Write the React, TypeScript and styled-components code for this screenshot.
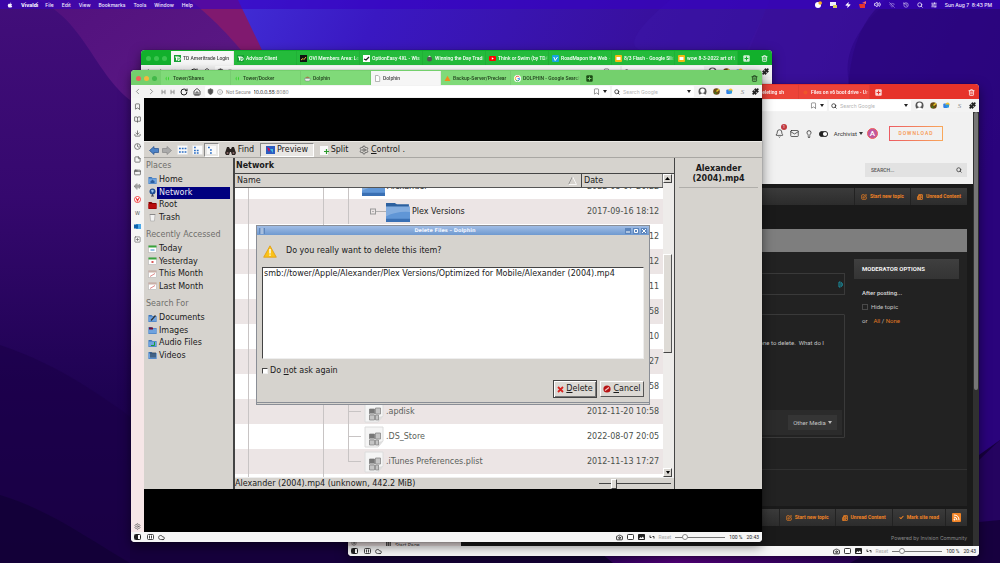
import React from 'react';
import styled, { createGlobalStyle, css } from 'styled-components';
import {
  Bell, Bookmark, BookOpen, Camera, Check, ChevronLeft, ChevronRight, Clock, Cloud, Download,
  Home, Info, Lightbulb, Mail, Newspaper, Puzzle,
  RotateCw, Search, Settings, Shield, SquarePen, SquarePlus,
  StickyNote, Trash2, Volume2, WifiOff, Zap, AppWindow, History, AudioLines, SlidersHorizontal,
} from 'lucide-react';
import { FaApple } from 'react-icons/fa';

const ui = '"Inter", "Liberation Sans", sans-serif';
const kde = '"DejaVu Sans", "Liberation Sans", sans-serif';
const forum = '"Roboto", "Liberation Sans", sans-serif';

const GlobalStyle = createGlobalStyle`
  * { box-sizing: border-box; }
  html, body { margin: 0; background: #1c0050; }
  body { font: 5px/8px ${ui}; overflow: hidden; }
  button, input { font: inherit; color: inherit; margin: 0; padding: 0; }
  button { border: 0; background: none; display: flex; align-items: center; justify-content: center; white-space: nowrap; }
  a { color: inherit; text-decoration: none; }
  ul { list-style: none; margin: 0; padding: 0; }
  h1, h2, p { margin: 0; font: inherit; }
  svg { display: block; flex: none; }
`;

/* ---------- desktop ---------- */
const Desktop = styled.div`
  position: relative;
  min-height: 100vh;
  overflow: hidden;
`;
const Wallpaper = styled.svg`
  position: absolute;
  inset: 0;
  width: 100%;
  height: 100%;
`;
const MenuBar = styled.header`
  position: relative;
  display: flex;
  align-items: center;
  height: 9px;
  padding: 0 8px 0 7px;
  background: rgba(55, 0, 195, 0.6);
  color: #f4efff;
  font-weight: 500;
`;
const Menus = styled.nav`
  display: flex;
  align-items: center;
  gap: 8px;
  flex: 1;
  b { font-weight: 800; margin-right: -1px; }
`;
const MenuExtras = styled.div`
  display: flex;
  align-items: center;
  gap: 8px;
  white-space: pre;
`;

const wallpaper = (
  <Wallpaper viewBox="0 0 1000 563" preserveAspectRatio="none" aria-hidden="true">
    <defs>
      <linearGradient id="base" x1="0" y1="0" x2="1" y2="0.25">
        <stop offset="0.2" stopColor="#4130d8" /><stop offset="0.36" stopColor="#3a18c2" />
        <stop offset="0.62" stopColor="#38109e" /><stop offset="1" stopColor="#2a037c" />
      </linearGradient>
      <linearGradient id="leftmid" x1="0" y1="0" x2="0.4" y2="1">
        <stop offset="0" stopColor="#50107c" /><stop offset="0.5" stopColor="#5d1a86" /><stop offset="1" stopColor="#2c0668" />
      </linearGradient>
      <linearGradient id="leftdark" x1="0" y1="0" x2="0" y2="1">
        <stop offset="0" stopColor="#420e7a" /><stop offset="0.35" stopColor="#35086e" />
        <stop offset="0.7" stopColor="#1e0252" /><stop offset="1" stopColor="#17003e" />
      </linearGradient>
      <linearGradient id="mag" x1="0" y1="0" x2="1" y2="0">
        <stop offset="0" stopColor="#2a0060" /><stop offset="0.3" stopColor="#5c0088" /><stop offset="1" stopColor="#25005a" />
      </linearGradient>
    </defs>
    <rect width="1000" height="563" fill="url(#base)" />
    <path d="M640 50C625 45 640 25 670 0H770L745 60V563H640Z" fill="#3c16a8" opacity=".5" />
    <path d="M770 0 742 60V110H860C830 60 860 25 890 0Z" fill="#3d129e" opacity=".6" />
    <path d="M885 0C850 30 850 70 846 110H1000V0Z" fill="#2b057d" opacity=".7" />
    <path d="M0 0H238L262 50 300 563H0Z" fill="#80196f" />
    <path d="M0 0H190C215 20 228 35 241 50L280 563H0Z" fill="url(#leftmid)" />
    <path d="M0 0H38C90 22 100 95 150 110V563H0Z" fill="url(#leftdark)" />
    <path d="M0 345C60 365 110 400 160 440V563H0Z" fill="#1a0048" opacity=".6" />
    <path d="M0 495C50 510 90 540 130 563H0Z" fill="#0e0030" opacity=".55" />
    <path d="M130 520H1000V563H130Z" fill="#16003c" />
    <path d="M585 540 613 563H860L890 535Z" fill="url(#mag)" />
    <path d="M979 455 1000 440V563H850C890 540 940 525 979 521Z" fill="#17003f" />
    <path d="M979 460 1000 440V520L979 522Z" fill="#250360" />
  </Wallpaper>
);

/* ---------- browser chrome ---------- */
const Win = styled.section<{ $left: string; $right: string; $top: number; $bottom: number }>`
  position: absolute;
  left: ${(p) => p.$left};
  right: ${(p) => p.$right};
  top: ${(p) => p.$top}px;
  bottom: ${(p) => p.$bottom}px;
  display: flex;
  flex-direction: column;
  border-radius: 4px;
  overflow: hidden;
  background: #f7f7f7;
`;
const WinShadow = styled.div<{ $left: string; $right: string; $top: number; $bottom: number }>`
  position: absolute;
  left: ${(p) => p.$left};
  right: ${(p) => p.$right};
  top: ${(p) => p.$top}px;
  bottom: ${(p) => p.$bottom}px;
  border-radius: 4px;
  box-shadow: 0 4px 12px rgba(0, 0, 0, 0.5), 0 0 1px rgba(0, 0, 0, 0.7);
`;
const TabStrip = styled.div<{ $bg: string; $fg: string }>`
  display: flex;
  height: 15px;
  flex: none;
  padding: 1px 4px 0 5px;
  background: ${(p) => p.$bg};
  color: ${(p) => p.$fg};
  align-items: center;
`;
const Lights = styled.div`
  display: flex;
  gap: 3px;
  width: 25px;
  flex: none;
`;
const Light = styled.i<{ $c: string }>`
  width: 5px;
  height: 5px;
  border-radius: 50%;
  background: ${(p) => p.$c};
`;
const Tab = styled.button<{ $w: number; $bg: string; $active?: boolean }>`
  width: ${(p) => p.$w}px;
  flex: none;
  height: 100%;
  gap: 2px;
  padding: 0 0 0 3px;
  justify-content: flex-start;
  font-family: ${forum};
  font-weight: 500;
  overflow: hidden;
  border-right: 1px solid rgba(0, 0, 0, 0.06);
  background: ${(p) => (p.$active ? '#f6f6f6' : p.$bg)};
  color: ${(p) => (p.$active ? '#444' : 'inherit')};
`;
const TabTitle = styled.span`
  flex: 1;
  min-width: 0;
  text-align: left;
  overflow: hidden;
  mask-image: linear-gradient(to right, #000 92%, transparent);
`;
const StripEnd = styled.div`
  flex: 1;
  display: flex;
  justify-content: space-between;
  align-items: center;
  padding-left: 5px;
`;
const Toolbar = styled.div`
  display: flex;
  align-items: center;
  height: 13px;
  flex: none;
  background: #f3f3f3;
  color: #222;
  padding: 0 3px 0 2px;
  gap: 2px;
`;
const NavButtons = styled.div`
  display: flex;
  align-items: center;
  justify-content: space-between;
  width: 70px;
  padding: 0 2px 0 0;
`;
const Field = styled.label<{ $w?: number }>`
  display: flex;
  align-items: center;
  gap: 3px;
  height: 11px;
  padding: 0 3px 0 2px;
  background: #fff;
  border-radius: 1px;
  min-width: 0;
  ${(p) => (p.$w ? css`width: ${p.$w}px; flex: none;` : css`flex: 1;`)}
  input { border: 0; background: none; outline: 0; min-width: 0; flex: 1; height: 9px; }
  input::placeholder { color: #b4b4b4; opacity: 1; }
`;
const Address = styled.span`
  display: flex;
  align-items: center;
  flex: 1;
  min-width: 0;
  && input { flex: none; field-sizing: content; }
`;
const Muted = styled.span`
  color: #888;
  white-space: nowrap;
`;
const NotSecure = styled(Muted)`
  font-family: ${forum};
`;
const Extensions = styled.div`
  display: flex;
  align-items: center;
  padding-left: 2px;
  width: 63px;
  flex: none;
  justify-content: space-between;
`;
const Serif = styled.span`
  font: italic 7px/8px "Liberation Serif", serif;
  color: #888;
  width: 7px;
  text-align: center;
`;
const StatusBar = styled.footer`
  display: flex;
  align-items: center;
  height: 10px;
  flex: none;
  gap: 4px;
  padding: 0 3px 0 3px;
  background: #f6f6f6;
  color: #222;
  font-family: ${forum};
  button:first-child { margin-right: 2px; }
`;
const Grow = styled.span`
  flex: 1;
`;
const Faint = styled.button`
  && { color: #aaa; }
`;
const Zoom = styled.input`
  appearance: none;
  width: 50px;
  height: 6px;
  background: linear-gradient(#777, #777) center / 100% 1px no-repeat;
  &::-webkit-slider-thumb {
    appearance: none;
    width: 6px;
    height: 6px;
    border-radius: 50%;
    background: #fff;
    border: 1px solid #888;
  }
`;

const Caret = ({ c = '#222' }: { c?: string }) => (
  <svg width="4" height="3" viewBox="0 0 4 3"><path d="M0 0h4L2 3z" fill={c} /></svg>
);
const Skip = () => (
  <svg width="5" height="6" viewBox="0 0 5 6"><path d="M1 .8v4.400M4 .8v4.400M1 3h3" stroke="#888" strokeWidth=".9" /></svg>
);
const PlusBox = ({ c, s }: { c: string; s: string }) => (
  <svg width="7" height="7" viewBox="0 0 7 7"><rect x=".3" y=".3" width="6.4" height="6.4" rx="1" fill={c} /><path d="M3.5 1.6v3.8M1.6 3.5h3.8" stroke={s} /></svg>
);
const Fav = ({ kind }: { kind: string }) => {
  const art: Record<string, React.ReactNode> = {
    td: <><rect width="7" height="7" fill="#17a034" /><path d="M1 2h3M2.5 2v3.5M4 5.5V2Q6.200 2 6.200 3.800T4 5.500" stroke="#fff" fill="none" /></>,
    dark: <><rect width="7" height="7" fill="#111" /><path d="M1 5 3 3.500 4 4.500 6 2" stroke="#e7b73c" fill="none" /></>,
    light: <><rect width="7" height="7" fill="#fff" /><path d="M1 4 3 5 6 2" stroke="#222" strokeWidth="1.300" fill="none" /></>,
    day: <><circle cx="3.500" cy="4" r="2.500" fill="#555" /><path d="M2 2 3.500.5 5 2" fill="#ddd" /></>,
    yt: <><rect y="1" width="7" height="5" rx="1" fill="#f00" /><path d="m2.800 2.300 2 1.200-2 1.200z" fill="#fff" /></>,
    vimeo: <><rect width="7" height="7" rx="1" fill="#16a5e0" /><path d="m1.800 2 1.400 3.500L5.500 2" stroke="#fff" fill="none" /></>,
    slides: <><rect width="7" height="7" rx="1" fill="#f5b912" /><rect x="1.500" y="2" width="4" height="3" fill="#fff" /></>,
    tower: <path d="M2.600 1.500A2.500 2.500 0 0 0 2.600 5.500ZM4 1.500A2.500 2.500 0 0 1 4 5.500Z" fill="#35d32c" />,
    bowl: <><path d="M.5 3.500h6L5.500 6h-4z" fill="#eee" stroke="#667" strokeWidth=".4" /><path d="M1 3Q3.500 0 6 3z" fill="#a08050" /></>,
    page: <path d="M1.500.5h2.700L5.700 2v4.500H1.500Z" fill="#fff" stroke="#999" strokeWidth=".7" />,
    tri: <path d="M3.500.8 6.500 6h-6z" fill="#f08c1c" />,
    google: <><circle cx="3.500" cy="3.500" r="3.500" fill="#fff" /><path d="M5.400 2.200A2.200 2.200 0 0 0 1.600 2.500" stroke="#e94235" fill="none" /><path d="M1.600 2.500A2.200 2.200 0 0 0 1.700 4.800" stroke="#fabb05" fill="none" /><path d="M1.700 4.800A2.200 2.200 0 0 0 5 5.200" stroke="#34a853" fill="none" /><path d="M5 5.200 5.700 3.600H3.600" stroke="#4285f4" fill="none" /></>,
    dots: <circle cx="3.500" cy="3.500" r="2" fill="#f05a28" opacity=".8" />,
  };
  return <svg width="7" height="7" viewBox="0 0 7 7">{art[kind]}</svg>;
};

type TabInfo = { title: string; icon: string; active?: boolean };
type ChromeProps = {
  strip: string; tabBg: string; fg: string; lights: string[]; tabs: TabInfo[]; tabW: number;
  lead?: number; url: string; port?: string; insecure?: boolean;
};
const Lead = styled.span<{ $w: number }>`
  width: ${(p) => p.$w}px;
  flex: none;
`;

function Chrome({ strip, tabBg, fg, lights, tabs, tabW, lead, url, port, insecure }: ChromeProps) {
  const light = fg === '#fff';
  return (
    <>
      <TabStrip $bg={strip} $fg={fg}>
        <Lights>{lights.map((c, i) => <Light key={i} $c={c} />)}</Lights>
        {lead && <Lead $w={lead} />}
        {tabs.map((t, i) => (
          <Tab key={i} $w={tabW} $bg={tabBg} $active={t.active}>
            <Fav kind={t.icon} />
            <TabTitle>{t.title}</TabTitle>
          </Tab>
        ))}
        <StripEnd>
          <button aria-label="New tab"><PlusBox c={light ? '#ffffffcc' : '#1d4d16'} s={strip} /></button>
          <button aria-label="Closed tabs"><Trash2 size={7} strokeWidth={2.5} /></button>
        </StripEnd>
      </TabStrip>
      <Toolbar>
        <NavButtons>
          <button aria-label="Back"><ChevronLeft size={9} color="#777" /></button>
          <button aria-label="Forward"><ChevronRight size={9} color="#777" /></button>
          <button aria-label="Rewind"><Skip /></button>
          <button aria-label="Fast forward"><Skip /></button>
          <button aria-label="Reload"><RotateCw size={8} strokeWidth={3} /></button>
          <button aria-label="Home"><Home size={8} strokeWidth={2.5} /></button>
        </NavButtons>
        <Field>
          <Shield size={7} fill="#555" color="#555" />
          <Info size={6} color="#777" />
          {insecure && <NotSecure>Not Secure</NotSecure>}
          <Address>
            <input aria-label="Address" readOnly value={url} />
            {port && <Muted>{port}</Muted>}
          </Address>
          <Bookmark size={7} color="#555" />
          <Caret />
        </Field>
        <Field $w={82}>
          <Search size={6} strokeWidth={3} />
          <input aria-label="Search" placeholder="Search Google" />
          <Caret />
        </Field>
        <Extensions>
          <svg width="9" height="9" viewBox="0 0 9 9"><circle cx="4.500" cy="4.500" r="4" fill="#555" /><circle cx="4.500" cy="3.700" r="2.300" fill="#fff" /><path d="M1.500 8Q4.500 4.500 7.500 8V9h-6Z" fill="#fff" /></svg>
          <svg width="7" height="7" viewBox="0 0 7 7"><circle cx="3.500" cy="3.500" r="3.300" fill="#6a4a12" /><path d="M3.500 3.500 6 1.200" stroke="#e6c62a" strokeWidth="1.500" /><circle cx="2.500" cy="5" r="1" fill="#3b7c1e" /></svg>
          <svg width="7" height="7" viewBox="0 0 7 7"><rect x=".3" y="1.500" width="4.500" height="4.500" rx="1" fill="#2f7fe6" /><circle cx="4.600" cy="2.600" r="2" fill="#f2c230" /><path d="M3 2.500h3v3H3z" fill="#2b9adf" /></svg>
          <Serif>S</Serif>
          <Puzzle size={7} fill="#222" />
        </Extensions>
      </Toolbar>
    </>
  );
}

function BrowserStatus() {
  return (
    <StatusBar>
      <button aria-label="Panel"><svg width="7" height="6" viewBox="0 0 7 6"><rect x=".5" y=".5" width="6" height="5" rx=".8" fill="#fff" stroke="#222" /><path d="M1 1h3v4H1z" fill="#222" /></svg></button>
      <button aria-label="Tiling"><svg width="7" height="6" viewBox="0 0 7 6"><rect x=".5" y=".5" width="6" height="5" rx="1" fill="#fff" stroke="#333" strokeWidth=".9" /><path d="M2.500 1.500v3M4.500 1.500v3" stroke="#333" strokeWidth=".9" /></svg></button>
      <button aria-label="Sync"><Cloud size={7} strokeWidth={2.5} /></button>
      <Grow />
      <button aria-label="Capture"><Camera size={7} strokeWidth={3} /></button>
      <button aria-label="Tile"><svg width="7" height="6" viewBox="0 0 7 6"><rect x=".5" y=".5" width="6" height="5" rx=".8" fill="#fff" stroke="#222" strokeWidth=".9" /></svg></button>
      <button aria-label="Images"><svg width="7" height="6" viewBox="0 0 7 6"><rect width="7" height="6" rx=".8" fill="#222" /><path d="m1 5 1.500-2 1 1L5 2.500 6 5z" fill="#fff" /></svg></button>
      <button aria-label="Page actions"><svg width="6" height="6" viewBox="0 0 6 6"><path d="M1 1.500v2h1.500M5 4.500v-2H3.500" stroke="#333" fill="none" /></svg></button>
      <Faint>Reset</Faint>
      <Zoom type="range" aria-label="Zoom" min={0} max={100} defaultValue={16} />
      <span>100 %</span>
      <span>20:43</span>
    </StatusBar>
  );
}

/* ---------- forum page ---------- */
const PageRow = styled.div`
  display: flex;
  flex: 1;
  min-height: 0;
`;
const BookmarksPanel = styled.aside`
  width: 113px;
  flex: none;
  display: flex;
  align-items: flex-end;
  gap: 29px;
  padding: 0 3px;
  background: linear-gradient(#f4f4f4 50%, #e9dede);
  color: #444;
  height: 100%;
  p { display: flex; align-items: center; gap: 4px; height: 3px; }
`;
const Forum = styled.div`
  flex: 1;
  display: flex;
  flex-direction: column;
  background: #1a1a1a;
  color: #c4c4c4;
  font-family: ${forum};
  min-width: 0;
`;
const ForumHead = styled.header`
  height: 72px;
  flex: none;
  background: #f1f1f1;
  padding: 12px 6px 0;
  color: #333;
  display: flex;
  flex-direction: column;
  align-items: flex-end;
  gap: 20px;
`;
const UserBar = styled.div`
  display: flex;
  align-items: center;
  gap: 6px;
  padding-right: 24px;
  height: 19px;
`;
const Alert = styled.button`
  position: relative;
  span {
    position: absolute;
    left: 6px;
    top: -5px;
    width: 6px;
    height: 6px;
    border-radius: 50%;
    background: #c0393f;
    color: #fff;
    font: 4px/6px ${forum};
  }
`;
const UserButton = styled.button`
  && { font-size: 6px; gap: 2px; }
`;
const Avatar = styled.span`
  width: 11px;
  height: 11px;
  border-radius: 50%;
  border: 1px solid #f0625a;
  background: #c0569f;
  color: #fff;
  font: 500 8px/9px ${forum};
  text-align: center;
  margin-left: -2px;
`;
const DownloadButton = styled.a`
  width: 54px;
  height: 15px;
  margin-left: 5px;
  border: 1px solid;
  border-image: linear-gradient(to right, #ec5a62, #f9a85a) 1;
  color: #f7944a;
  font: 500 5px/13px ${forum};
  text-align: center;
  letter-spacing: 1px;
`;
const ForumSearch = styled.label`
  display: flex;
  align-items: center;
  width: 102px;
  height: 14px;
  padding: 0 5px 0 6px;
  background: #e2e2e2;
  input { flex: 1; min-width: 0; border: 0; background: none; font-weight: 500; }
  input::placeholder { color: #555; opacity: 1; }
`;
const ForumBar = styled.nav<{ $top: number }>`
  display: flex;
  justify-content: flex-end;
  height: 17px;
  flex: none;
  margin: ${(p) => p.$top}px 6px 0 0;
  background: linear-gradient(#3b3b3b, #2c2c2c);
  color: #f08326;
  font: 700 5px/17px ${forum};
  a { display: flex; align-items: center; gap: 3px; padding: 0 6px; border-left: 1px solid #222; }
`;
const Crumbs = styled.div`
  height: 23px;
  flex: none;
  margin: 24px 6px 0 0;
  background: #7e7e7e;
`;
const Thread = styled.main`
  display: flex;
  flex-direction: column;
  flex: 1;
  margin-right: 6px;
  background: #222;
`;
const Columns = styled.div`
  display: flex;
  gap: 9px;
  padding: 7px 8px 0 0;
  height: 218px;
  border-bottom: 1px solid #313131;
`;
const Composer = styled.div`
  flex: 1;
  display: flex;
  flex-direction: column;
  gap: 19px;
  padding-top: 14px;
`;
const TagBox = styled.div`
  height: 22px;
  border: 1px solid #3a3a3a;
  display: flex;
  align-items: center;
  justify-content: flex-end;
`;
const Editor = styled.div`
  height: 124px;
  border: 1px solid #3a3a3a;
  border-radius: 1px;
  display: flex;
  flex-direction: column;
  justify-content: space-between;
  padding: 24px 2px 2px 0;
  p { text-align: right; padding-right: 18px; white-space: pre; font-size: 6px; }
`;
const EditorFoot = styled.div`
  height: 25px;
  background: #2b2b2b;
  display: flex;
  justify-content: flex-end;
  align-items: center;
  padding-right: 5px;
  button { width: 49px; height: 15px; background: #353535; font-size: 6px; gap: 2px; }
`;
const Moderator = styled.aside`
  width: 105px;
  display: flex;
  flex-direction: column;
  gap: 6px;
  h2 { height: 20px; padding-left: 8px; background: linear-gradient(#3f3f3f, #343434); color: #f0f0f0; font: 700 6px/20px ${forum}; }
  p, label { padding-left: 8px; display: flex; align-items: center; gap: 3px; font-size: 6px; height: 8px; }
  a { color: #e07a22; }
`;
const AfterPosting = styled.p`
  && { margin-top: 4px; color: #ddd; font: 500 6px/8px ${forum}; }
`;
const MiniCheck = styled.input`
  appearance: none;
  width: 6px;
  height: 6px;
  border: 1px solid #4a4a4a;
`;
const Powered = styled.p`
  && { height: 20px; padding-top: 7px; text-align: right; margin-right: 6px; color: #8a8a8a; font: 5px/10px ${ui}; }
`;
const Scroll = styled.div`
  width: 6px;
  background: #303030;
  padding: 0 1px;
  &::before { content: ''; display: block; height: 278px; border-radius: 2px; background: #767676; }
`;

function ForumPage() {
  return (
    <PageRow>
      <BookmarksPanel>
        <Settings size={6} />
        <p>
          <svg width="5" height="5" viewBox="0 0 5 5"><path d="M0 0h5M0 2h5M0 4h5" stroke="#222" strokeDasharray="1.300 .5" strokeWidth="1.400" /></svg>
          Start Page
        </p>
      </BookmarksPanel>
      <Forum>
        <ForumHead>
          <UserBar>
            <Alert aria-label="Notifications"><Bell size={9} strokeWidth={2} /><span>1</span></Alert>
            <Mail size={9} strokeWidth={2} />
            <Lightbulb size={8} strokeWidth={2.5} />
            <svg width="9" height="6" viewBox="0 0 9 6"><rect x=".4" y=".4" width="8.200" height="5.200" rx="2.600" fill="#222" stroke="#222" strokeWidth=".8" /><circle cx="6" cy="3" r="2.100" fill="#fff" /></svg>
            <UserButton>Archivist <Caret c="#333" /></UserButton>
            <Avatar>A</Avatar>
            <DownloadButton href="#download">DOWNLOAD</DownloadButton>
          </UserBar>
          <ForumSearch>
            <input aria-label="Search the forum" placeholder="SEARCH..." />
            <Search size={6} strokeWidth={3} />
          </ForumSearch>
        </ForumHead>
        <ForumBar $top={4}>
          <a href="#new"><SquarePen size={6} strokeWidth={3} />Start new topic</a>
          <a href="#unread"><Newspaper size={6} strokeWidth={3} />Unread Content</a>
        </ForumBar>
        <Crumbs />
        <Thread>
          <Columns>
            <Composer>
              <TagBox>
                <svg width="6" height="7" viewBox="0 0 6 7"><path d="M1 1v5M1 1h1.500M1 6h1.500M3 1.500C5 2 5 5 3 5.500Z" stroke="#1893a5" fill="none" /></svg>
              </TagBox>
              <Editor>
                <p>one to delete.  What do I</p>
                <EditorFoot><button>Other Media <Caret c="#bbb" /></button></EditorFoot>
              </Editor>
            </Composer>
            <Moderator>
              <h2>MODERATOR OPTIONS</h2>
              <AfterPosting>After posting...</AfterPosting>
              <label><MiniCheck type="checkbox" />Hide topic</label>
              <p>or&nbsp;&nbsp;<span><a href="#all">All</a> / <a href="#none">None</a></span></p>
            </Moderator>
          </Columns>
        </Thread>
        <ForumBar $top={3}>
          <a href="#new"><SquarePen size={6} strokeWidth={3} />Start new topic</a>
          <a href="#unread"><Newspaper size={6} strokeWidth={3} />Unread Content</a>
          <a href="#read"><Check size={5} strokeWidth={5} />Mark site read</a>
          <a href="#rss" aria-label="RSS">
            <svg width="9" height="9" viewBox="0 0 9 9"><rect width="9" height="9" rx="1" fill="#f08326" /><circle cx="2.500" cy="6.500" r=".9" fill="#fff" /><path d="M1.800 4Q5 4 5 7.200M1.800 2Q7 2 7 7.200" stroke="#fff" fill="none" /></svg>
          </a>
        </ForumBar>
        <Powered>Powered by Invision Community</Powered>
      </Forum>
      <Scroll />
    </PageRow>
  );
}

/* ---------- remote file manager ---------- */
const SideRail = styled.nav`
  width: 13px;
  flex: none;
  display: flex;
  flex-direction: column;
  align-items: center;
  justify-content: space-between;
  padding: 2px 0 1px;
  background: linear-gradient(#f5f5f5 43%, #f6e6e7 58%);
  color: #555;
`;
const RailGroup = styled.div<{ $h: number }>`
  display: flex;
  flex-direction: column;
  height: ${(p) => p.$h}px;
  button { flex: 1; }
`;
const Remote = styled.div`
  flex: 1;
  min-width: 0;
  display: flex;
  flex-direction: column;
  padding: 43px 0;
  background: #000;
  font: 8px/12px ${kde};
  color: #1a1a1a;
`;
const Dolphin = styled.div`
  position: relative;
  flex: 1;
  min-height: 0;
  display: flex;
  flex-direction: column;
  background: #d6d3ce;
`;
const DolphinBar = styled.div`
  display: flex;
  align-items: center;
  height: 17px;
  flex: none;
  padding: 1px 3px 0;
  border-bottom: 1px solid #a9a7a3;
  border-top: 1px solid #eceae6;
  white-space: nowrap;
`;
const Tool = styled.button<{ $w: number; $down?: boolean }>`
  width: ${(p) => p.$w}px;
  height: 14px;
  flex: none;
  gap: 2px;
  ${(p) => p.$down && css`
    background: #e9e7e4;
    border: 1px solid;
    border-color: #888 #fff #fff #888;
  `}
  u { text-decoration-thickness: 1px; text-underline-offset: 1px; }
`;
const Split = styled.div`
  display: flex;
  flex: 1;
  min-height: 0;
`;
const Places = styled.nav`
  width: 89px;
  flex: none;
  padding: 2px 3px 0 2px;
  h2 { color: #6f6e6b; height: 12px; }
`;
const PlaceList = styled.ul`
  display: flex;
  flex-direction: column;
  height: 50px;
  margin: 2px 0 5px 2px;
`;
const Place = styled.li<{ $on?: boolean }>`
  display: flex;
  flex: 1;
  align-items: stretch;
  svg { align-self: center; }
  a { flex: 1; padding-left: 2px; }
  ${(p) => p.$on && css`a { background: #00007f; color: #e8e8f4; }`}
`;
const View = styled.main`
  flex: 1;
  min-width: 0;
  display: flex;
  flex-direction: column;
  border-left: 2px solid #444;
`;
const ViewTitle = styled.h1`
  && { height: 15px; padding: 2px 1px; font-weight: 700; }
`;
const ListWrap = styled.div`
  flex: 1;
  min-height: 0;
  display: flex;
  border-top: 1px solid #444;
  border-bottom: 1px solid #eee;
`;
const Files = styled.table`
  flex: 1;
  display: flex;
  flex-direction: column;
  border-collapse: collapse;
  min-width: 0;
  overflow: hidden;
  background: #fff;
  thead { display: block; }
  tbody { display: block; flex: 1; min-height: 0; margin-top: -14px; clip-path: inset(14px 0 0 0); }
`;
const HeadRow = styled.tr`
  display: flex;
  height: 14px;
  background: #d6d3ce;
  border-bottom: 1px solid #555;
  th { font-weight: 400; text-align: left; padding: 1px 2px; display: flex; align-items: center; justify-content: space-between; }
  th:first-child { flex: 1; padding-right: 4px; }
  th:last-child { width: 82px; border-left: 1px solid #444; border-right: 1px solid #777; }
`;
const Row = styled.tr<{ $odd: boolean }>`
  display: flex;
  height: 25px;
  line-height: 25px;
  background: ${(p) => (p.$odd ? '#ece5e5' : '#fff')};
  td { padding: 0; display: flex; align-items: center; white-space: nowrap; }
  td:first-child { flex: 1; min-width: 0; }
  td:last-child { width: 76px; color: #4a504a; }
`;
const Guide = styled.span<{ $w: number; $line?: boolean; $end?: boolean }>`
  width: ${(p) => p.$w}px;
  height: ${(p) => (p.$end ? 13 : 25)}px;
  align-self: flex-start;
  flex: none;
  border-left: ${(p) => (p.$line ? '1px solid #c8c4c4' : '0')};
`;
const Branch = styled.span`
  width: 12px;
  height: 1px;
  background: #c8c4c4;
  margin: 0 3px 0 0;
`;
const Name = styled.span<{ $dim?: boolean }>`
  padding-left: 2px;
  color: ${(p) => (p.$dim ? '#5a605a' : '#1a1a1a')};
`;
const Bar = styled.div`
  width: 11px;
  flex: none;
  background: #eeecea;
  display: flex;
  flex-direction: column;
  justify-content: space-between;
  button { width: 9px; height: 9px; background: #dad7d2; border: 1px solid; border-color: #fff #444 #444 #fff; }
`;
const BarThumb = styled.div`
  width: 9px;
  height: 99px;
  margin-bottom: 45px;
  background: #dedbd6;
  border: 1px solid;
  border-color: #fff #555 #444 #fff;
`;
const FileStatus = styled.div`
  height: 11px;
  flex: none;
  display: flex;
  align-items: center;
  justify-content: space-between;
  padding-right: 3px;
  line-height: 11px;
`;
const IconSize = styled.input`
  appearance: none;
  width: 72px;
  height: 10px;
  background: linear-gradient(#444, #444) center / 100% 1px no-repeat;
  &::-webkit-slider-thumb { appearance: none; width: 6px; height: 10px; background: #dedbd6; border: 1px solid; border-color: #fff #444 #444 #fff; }
`;
const InfoPane = styled.aside`
  width: 88px;
  flex: none;
  border-left: 1px solid #444;
  padding: 6px 4px;
  text-align: center;
  font-weight: 700;
  line-height: 10px;
  p { padding: 0 12px 3px; border-bottom: 1px solid #b0aeaa; }
`;

/* ---------- delete dialog ---------- */
const Dialog = styled.form`
  position: absolute;
  left: 112px;
  right: 112px;
  top: 84px;
  height: 180px;
  display: flex;
  flex-direction: column;
  background: #d6d3ce;
  border: 1px solid #8a8e96;
  border-bottom: 3px double #8a8e96;
`;
const DialogTitle = styled.div`
  display: flex;
  align-items: center;
  justify-content: space-between;
  height: 9px;
  padding: 0 2px;
  background: linear-gradient(#a0bde6, #6f99cf);
  color: #f2f6ff;
  font: 700 5px/9px ${kde};
  span:last-child { display: flex; gap: 2px; }
`;
const TitleKey = styled.button`
  && { width: 6px; height: 6px; background: #5d86bd; }
`;
const Question = styled.div`
  display: flex;
  align-items: center;
  gap: 9px;
  height: 32px;
  padding-left: 6px;
`;
const Items = styled.ul`
  && {
    height: 92px;
    margin: 0 5px;
    padding: 0 1px;
    background: #fff;
    border: 1px solid;
    border-color: #444 #eee #eee #444;
    white-space: nowrap;
    overflow: hidden;
  }
`;
const DontAsk = styled.label`
  display: flex;
  align-items: center;
  gap: 2px;
  height: 24px;
  padding-left: 5px;
  input { appearance: none; width: 6px; height: 6px; background: #fff; border: 1px solid; border-color: #444 #eee #eee #444; }
`;
const Actions = styled.div`
  display: flex;
  justify-content: flex-end;
  align-items: center;
  gap: 3px;
  height: 18px;
  margin-top: -3px;
  padding-right: 5px;
`;
const Push = styled.button<{ $default?: boolean }>`
  && {
    height: ${(p) => (p.$default ? 18 : 16)}px;
    width: 44px;
    gap: 2px;
    background: #dcd9d4;
    border: 1px solid;
    border-color: #fff #555 #555 #fff;
    ${(p) => p.$default && css`border-color: #444; box-shadow: inset 1px 1px #fff, inset -1px -1px #777;`}
  }
`;

const Folder = ({ w, h }: { w: number; h: number }) => (
  <svg width={w} height={h} viewBox="0 0 22 18" preserveAspectRatio="none"><path d="M0 1h8l2 1h11v15H0z" fill="#2d619f" /><path d="M0 4h22v12H0z" fill="#6096d6" /><path d="M0 4h22v5Q10 8 0 13z" fill="#fff" opacity=".22" /><path d="M0 15h22v3H0z" fill="#3a70b4" /></svg>
);
const DocIcon = () => (
  <svg width="20" height="22" viewBox="0 0 20 22"><path d="M1 1h18v14l-5 6H1z" fill="#f5f5f5" stroke="#dcdcdc" /><path d="m19 15-5 1v5z" fill="#ddd" /><path d="M5.500 8h5v5h-5zM11.500 7h5v6h-5zM5.500 14h5v5h-5zM11.500 14h3v5h-3z" fill="#c4c4c4" stroke="#888" strokeWidth=".8" /><path d="M5.500 8h5v4h-5z" fill="#777" /></svg>
);
const SmallIcon = ({ kind }: { kind: string }) => {
  const cal = (mark: React.ReactNode, top: string) => (
    <><rect x=".5" y="1" width="8" height="6.500" fill="#fff" stroke="#aaa" strokeWidth=".5" /><rect x=".5" y=".5" width="8" height="2" fill={top} />{mark}</>
  );
  const blue = (extra: React.ReactNode) => <><path d="M.5 1h3l1 1h4v6h-8z" fill="#3c74b8" /><path d="M.5 2.500h8v5h-8z" fill="#6fa3df" />{extra}</>;
  const month = cal(<path d="M2 6.500 7 3.500" stroke="#d88" />, '#c9b0a8');
  const art: Record<string, React.ReactNode> = {
    home: blue(<path d="m2.500 5.500 2-2 2 2v1.500h-4z" fill="#2c5e9f" />),
    net: <><circle cx="4.500" cy="3.500" r="3" fill="#1e4c93" /><path d="M3 2q2-1 3 1l-2 2z" fill="#9cc6f0" /><path d="M3 8h3M4.500 6v2" stroke="#445" /></>,
    root: <><path d="M.5 1h3l1 1h4v6h-8z" fill="#800" /><path d="M.5 3h8v4.500h-8z" fill="#b80c0c" /></>,
    trash: <><path d="M2 1.500h5l-.6 6.500H2.600z" fill="#f2f2f2" stroke="#999" strokeWidth=".5" /><path d="M1.700 1.500h5.600" stroke="#888" /></>,
    today: cal(<path d="M2.500 5h4" stroke="#38c" />, '#38a33c'),
    yest: cal(<path d="M3.500 5h2" stroke="#c22" strokeWidth="1.500" />, '#38a33c'),
    month, last: month,
    docs: blue(<path d="m3 6.500 4.500-5" stroke="#333" strokeWidth="1.200" />),
    images: blue(<path d="M1 1.500h4v2H1z" fill="#713" />),
    audio: blue(<path d="M3 6.500h3.500V3" stroke="#1a9d3a" fill="none" />),
    videos: blue(<path d="M3 1v6M5 1v6M7 1v6M2 3h6M2 5h6" stroke="#234" strokeWidth=".7" />),
  };
  return <svg width="9" height="9" viewBox="0 0 9 9">{art[kind]}</svg>;
};

const ViewIcon = ({ d }: { d: string }) => (
  <svg width="11" height="10" viewBox="0 0 11 10"><rect x=".5" y=".5" width="10" height="9" fill="#fafafa" stroke="#ddd" strokeWidth=".5" /><path d={d} stroke="#2d6fc4" strokeWidth="1.600" strokeDasharray="1.800 1" /></svg>
);

const placeGroups = [
  { title: 'Places', items: [['Home', 'home'], ['Network', 'net'], ['Root', 'root'], ['Trash', 'trash']] },
  { title: 'Recently Accessed', items: [['Today', 'today'], ['Yesterday', 'yest'], ['This Month', 'month'], ['Last Month', 'last']] },
  { title: 'Search For', items: [['Documents', 'docs'], ['Images', 'images'], ['Audio Files', 'audio'], ['Videos', 'videos']] },
];
const rows: { name?: string; date: string; kind?: string }[] = [
  { name: 'Alexander', date: '2022-08-07 20:22', kind: 'folder' },
  { name: 'Plex Versions', date: '2017-09-16 18:12', kind: 'sub' },
  { date: '2017-09-16 18:12' },
  { date: '2017-09-16 18:12' },
  { date: '2017-09-16 18:11' },
  { date: '2012-11-20 10:58' },
  { date: '2022-08-07 20:10' },
  { date: '2012-11-13 17:27' },
  { date: '2012-11-20 10:58' },
  { name: '.apdisk', date: '2012-11-20 10:58', kind: 'doc' },
  { name: '.DS_Store', date: '2022-08-07 20:05', kind: 'doc' },
  { name: '.iTunes Preferences.plist', date: '2012-11-13 17:27', kind: 'last' },
  { date: '' },
];

function DolphinWindow() {
  return (
    <Dolphin>
      <DolphinBar>
        <Tool $w={13} aria-label="Back"><svg width="10" height="9" viewBox="0 0 10 9"><path d="M.5 4.500 5 .5V2.500h4.500v4H5v2z" fill="#4c82c6" stroke="#234f8c" strokeWidth=".7" /></svg></Tool>
        <Tool $w={13} aria-label="Forward"><svg width="10" height="9" viewBox="0 0 10 9"><path d="M9.500 4.500 5 .5V2.500H.5v4H5v2z" fill="#aaa" stroke="#888" strokeWidth=".7" /></svg></Tool>
        <Tool $w={18} aria-label="Icons"><ViewIcon d="M2 3.500h8M2 7h8" /></Tool>
        <Tool $w={13} aria-label="Compact"><ViewIcon d="M2 2.500h2M2 5.500h5M2 8h5" /></Tool>
        <Tool $w={15} $down aria-label="Details"><ViewIcon d="M2 2.500h2M4 5h2M4 8h2" /></Tool>
        <Tool $w={41}>
          <svg width="11" height="9" viewBox="0 0 11 9"><path d="M2 1h2l1 2h1l1-2h2l2 6-1 2H7L6 6H5L4 9H1L0 7z" fill="#2a2320" /><circle cx="2.500" cy="7" r="1" fill="#866" /><circle cx="8.500" cy="7" r="1" fill="#866" /></svg>
          Find
        </Tool>
        <Tool $w={54} $down>
          <svg width="9" height="8" viewBox="0 0 9 8"><rect width="9" height="8" fill="#2c5cc0" /><path d="M1 1 4 3 3 6z" fill="#e04" /><path d="M4 3h3v4z" fill="#4bd" /></svg>
          Preview
        </Tool>
        <Tool $w={40}>
          <svg width="9" height="9" viewBox="0 0 9 9"><rect width="8" height="9" fill="#fafafa" /><path d="M4 5.500h5M6.500 3v5" stroke="#2b9a2b" strokeWidth="1.200" /></svg>
          Split
        </Tool>
        <Tool $w={56}>
          <Settings size={10} color="#555" strokeWidth={2} /><span><u>C</u>ontrol .</span>
        </Tool>
      </DolphinBar>
      <Split>
        <Places>
          {placeGroups.map((g) => (
            <React.Fragment key={g.title}>
              <h2>{g.title}</h2>
              <PlaceList>
                {g.items.map(([label, icon]) => (
                  <Place key={label} $on={label === 'Network'}><SmallIcon kind={icon} /><a href={`#${icon}`}>{label}</a></Place>
                ))}
              </PlaceList>
            </React.Fragment>
          ))}
        </Places>
        <View>
          <ViewTitle>Network</ViewTitle>
          <ListWrap>
            <Files>
              <thead>
                <HeadRow>
                  <th>Name<svg width="9" height="9" viewBox="0 0 9 9"><path d="M.5 8.500 4.500.5" stroke="#888" strokeWidth=".8" /><path d="m4.500.5 4 8h-8" stroke="#fff" strokeWidth=".8" fill="none" /></svg></th>
                  <th>Date</th>
                </HeadRow>
              </thead>
              <tbody>
                {rows.map((r, i) => (
                  <Row key={i} $odd={i % 2 === 1}>
                    <td>
                      <Guide $w={13} /><Guide $w={75} $line /><Guide $w={25} $line />
                      {r.kind === 'folder' && <><Guide $w={14} $line /><Folder w={23} h={19} /><Name>{r.name}</Name></>}
                      {r.kind === 'sub' && (
                        <>
                          <Guide $w={22} $line />
                          <svg width="16" height="7" viewBox="0 0 16 7"><rect x=".5" y="1" width="5" height="5" fill="none" stroke="#999" /><path d="M2 3.500h2M6 3.500h10" stroke="#999" strokeWidth=".7" /></svg>
                          <Folder w={24} h={20} /><Name>{r.name}</Name>
                        </>
                      )}
                      {(r.kind === 'doc' || r.kind === 'last') && (
                        <><Guide $w={1} $line $end={r.kind === 'last'} /><Branch /><DocIcon /><Name $dim>{r.name}</Name></>
                      )}
                    </td>
                    <td>{r.date}</td>
                  </Row>
                ))}
              </tbody>
            </Files>
            <Bar>
              <button aria-label="Scroll up"><svg width="5" height="3" viewBox="0 0 5 3"><path d="M0 3h5L2.500 0z" /></svg></button>
              <BarThumb />
              <button aria-label="Scroll down"><Caret c="#000" /></button>
            </Bar>
          </ListWrap>
          <FileStatus>
            <span>Alexander (2004).mp4 (unknown, 442.2 MiB)</span>
            <IconSize type="range" aria-label="Icon size" defaultValue={18} />
          </FileStatus>
        </View>
        <InfoPane><p>Alexander (2004).mp4</p></InfoPane>
      </Split>
      <Dialog onSubmit={(e) => e.preventDefault()} role="dialog" aria-label="Delete Files">
        <DialogTitle>
          <TitleKey type="button" aria-label="Menu"><svg width="4" height="6" viewBox="0 0 4 6"><path d="M0 1h4M0 3h4M0 5h4M2 0v6" stroke="#dfe9f8" strokeWidth=".7" /></svg></TitleKey>
          <span>Delete Files – Dolphin</span>
          <span>
            <TitleKey type="button" aria-label="Minimize"><svg width="4" height="4" viewBox="0 0 4 4"><path d="M0 3h4" stroke="#fff" /></svg></TitleKey>
            <TitleKey type="button" aria-label="Maximize"><svg width="4" height="4" viewBox="0 0 4 4"><path d="M.5.5h3v3h-3z" fill="none" stroke="#fff" /></svg></TitleKey>
            <TitleKey type="button" aria-label="Close"><svg width="4" height="4" viewBox="0 0 4 4"><path d="m0 0 4 4M4 0 0 4" stroke="#fff" /></svg></TitleKey>
          </span>
        </DialogTitle>
        <Question>
          <svg width="14" height="13" viewBox="0 0 14 13"><path d="m7 .8 6.300 11.400H.7z" fill="#fbc318" stroke="#e09a10" strokeWidth=".8" strokeLinejoin="round" /><path d="M7 4v4.500M7 9.500v1.300" stroke="#fff" strokeWidth="1.400" /></svg>
          Do you really want to delete this item?
        </Question>
        <Items><li>smb://tower/Apple/Alexander/Plex Versions/Optimized for Mobile/Alexander (2004).mp4</li></Items>
        <DontAsk><input type="checkbox" /><span>Do <u>n</u>ot ask again</span></DontAsk>
        <Actions>
          <Push $default type="submit">
            <svg width="7" height="7" viewBox="0 0 7 7"><path d="m1 1 5 5M6 1 1 6" stroke="#d8231f" strokeWidth="1.800" /></svg>
            <span><u>D</u>elete</span>
          </Push>
          <Push type="button">
            <svg width="8" height="8" viewBox="0 0 8 8"><circle cx="4" cy="4" r="3.600" fill="#b81414" /><path d="M2 5.500 6 2.500" stroke="#f3c8c8" strokeWidth="1.100" /></svg>
            <span><u>C</u>ancel</span>
          </Push>
        </Actions>
      </Dialog>
    </Dolphin>
  );
}

const railIcons = [Bookmark, BookOpen, Download, Clock, StickyNote, AppWindow, AudioLines];

const back = { $left: '14.1%', $right: '22.8%', $top: 50, $bottom: 100 };
const red = { $left: '34.8%', $right: '2.1%', $top: 84, $bottom: 7 };
const front = { $left: '13.1%', $right: '23.8%', $top: 70, $bottom: 21 };

export default function App() {
  return (
    <Desktop>
      <GlobalStyle />
      {wallpaper}
      <MenuBar>
        <Menus>
          <FaApple size={6} />
          <b>Vivaldi</b><span>File</span><span>Edit</span><span>View</span><span>Bookmarks</span><span>Tools</span><span>Window</span><span>Help</span>
        </Menus>
        <MenuExtras>
          <svg width="7" height="7" viewBox="0 0 7 7"><circle cx="3" cy="4" r="3" fill="#fff" /><circle cx="5.200" cy="2" r="1.800" fill="#f5a81c" /></svg>
          <svg width="7" height="7" viewBox="0 0 7 7"><rect y="1" width="6" height="4" fill="#eef" /><path d="M3 4h4v3H3z" fill="#d7cf5a" /></svg>
          <Zap size={6} fill="#fff" />
          <svg width="7" height="7" viewBox="0 0 7 7"><path d="M0 3h6v4H1z" fill="#e8342c" /><path d="m3 2 4-2v3z" fill="#f66" /></svg>
          <Volume2 size={7} strokeWidth={3} />
          <WifiOff size={6} color="#b9a5e8" />
          <History size={6} />
          <Search size={6} strokeWidth={3} />
          <SlidersHorizontal size={6} strokeWidth={3} />
          <span>Sun Aug 7  8:43 PM</span>
        </MenuExtras>
      </MenuBar>

      <WinShadow {...back} />
      <Win {...back}>
        <Chrome
          strip="#12b02c" tabBg="#24bb3b" fg="#fff" lights={['#3cc54f', '#3cc54f', '#3cc54f']} tabW={63}
          url="invest.ameritrade.com/grid/p/login"
          tabs={[
            { title: 'TD Ameritrade Login', icon: 'td', active: true }, { title: 'Advisor Client', icon: 'td' },
            { title: 'OVI Members Area: Lo', icon: 'dark' }, { title: 'OptionEasy 4XL - Wis', icon: 'light' },
            { title: 'Winning the Day Tradi', icon: 'day' }, { title: 'Think or Swim (by TDA', icon: 'yt' },
            { title: 'RoadMapon the Web -', icon: 'vimeo' }, { title: '8/3 Flash - Google Slid', icon: 'slides' },
            { title: 'wow 8-3-2022 art of t', icon: 'slides' },
          ]}
        />
      </Win>

      <WinShadow {...red} />
      <Win {...red}>
        <Chrome
          strip="#e6332a" tabBg="#ec4338" fg="#fff" lights={['#f06a60', '#f06a60', '#f06a60']} tabW={71} lead={350}
          url="forums.unraid.net"
          tabs={[{ title: 'Delay of deleting sh', icon: 'dots' }, { title: 'Files on v6 boot drive - Un', icon: 'dots' }]}
        />
        <ForumPage />
        <BrowserStatus />
      </Win>

      <WinShadow {...front} />
      <Win {...front}>
        <Chrome
          strip="#74d06d" tabBg="#80da79" fg="#1f3d1c" lights={['#f2625a', '#f3b93c', '#43b84a']} tabW={70}
          url="10.0.0.55" port=":8080" insecure
          tabs={[
            { title: 'Tower/Shares', icon: 'tower' }, { title: 'Tower/Docker', icon: 'tower' }, { title: 'Dolphin', icon: 'bowl' },
            { title: 'Dolphin', icon: 'page', active: true }, { title: 'Backup-Server/Preclear', icon: 'tri' },
            { title: 'DOLPHIN - Google Search', icon: 'google' },
          ]}
        />
        <PageRow>
          <SideRail>
            <RailGroup $h={146}>
              {railIcons.map((I, i) => <button key={i} aria-label={`Panel ${i + 1}`}><I size={7} strokeWidth={2.5} /></button>)}
              <button aria-label="Vivaldi"><svg width="7" height="7" viewBox="0 0 7 7"><circle cx="3.500" cy="3.500" r="3" fill="#fff" stroke="#e33" strokeWidth=".9" /><path d="m2.200 2.300 1.300 2.400 1.300-2.400" fill="none" stroke="#e33" strokeWidth="1.200" /></svg></button>
              <button aria-label="Wikipedia">W</button>
              <button aria-label="Outlook"><svg width="7" height="7" viewBox="0 0 7 7"><rect x="2" y="1" width="5" height="5" fill="#4aa8e8" /><rect y="1.500" width="4" height="4" fill="#0f62ac" /></svg></button>
              <button aria-label="Add panel"><SquarePlus size={7} /></button>
            </RailGroup>
            <RailGroup $h={10}><button aria-label="Settings"><Settings size={7} /></button></RailGroup>
          </SideRail>
          <Remote><DolphinWindow /></Remote>
        </PageRow>
        <BrowserStatus />
      </Win>
    </Desktop>
  );
}
